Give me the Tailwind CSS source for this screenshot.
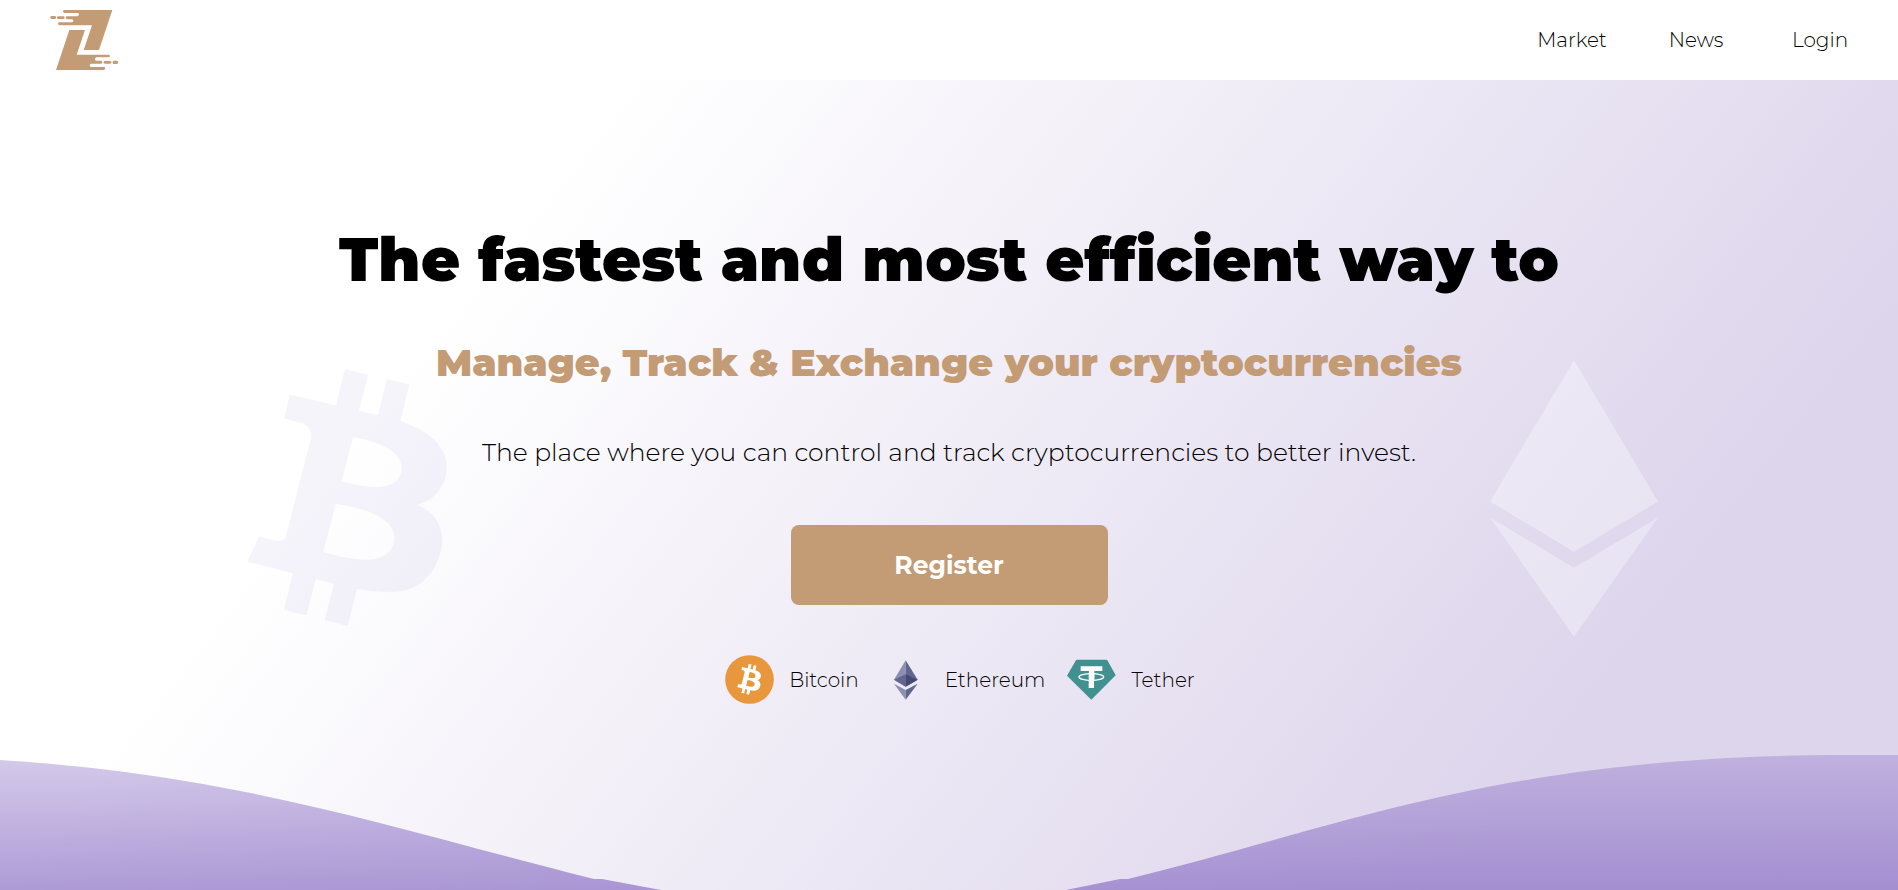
<!DOCTYPE html>
<html lang="en">
<head>
<meta charset="utf-8">
<meta name="viewport" content="width=device-width, initial-scale=1">
<title>Crypto exchange</title>
<script src="https://cdn.jsdelivr.net/npm/@tailwindcss/browser@4"></script>
</head>
<body class="flex min-h-screen flex-col bg-white font-['Montserrat','Inter',sans-serif] text-black">
<svg class="hidden" aria-hidden="true">
  <symbol id="btc" viewBox="54 57 600 771">
    <path fill-rule="evenodd" d="M348 58L418 74L390 182L446 195L474 88L541 103L514 213C606 246 653 290 653 352C653 405 620 450 565 465C615 484 640 525 640 578C637 600 620 716 500 725C450 727 410 722 384 717L356 827L287 810L315 701L260 687L233 796L165 780L192 670L55 635L90 560L145 573C160 575 169 568 172 553L246 265C250 240 235 225 218 219L165 205L183 134L321 166ZM372 261L338 394C370 403 400 410 440 411C490 412 518 390 518 352C518 305 450 275 372 261ZM320 461L283 606C330 620 375 629 420 629C470 627 496 600 496 562C496 510 420 475 320 461Z"/>
  </symbol>
</svg>

<header class="flex h-20 shrink-0 items-center justify-between bg-white pr-4 pl-[50px]">
  <a href="#" aria-label="Home">
    <svg class="h-16 w-[70px]" viewBox="60 24 210 192" fill="#c39b74">
      <path d="M103 30H247L207 150H161L186 76H89Q84 75 84 71T89 67H126Q130 65 130 62T126 58H112Q107 57 107 53T112 49H142Q147 47 147 43T142 39H103Q99 38 99 34T103 30Z"/>
      <path d="M118 90H165L140 164H236Q240 165 240 168T236 172H199Q195 174 195 178T199 182H213Q217 183 217 187T213 191H183Q179 193 179 196T183 201H222Q226 202 226 205T222 210H78Z"/>
      <rect x="61" y="48" width="17" height="9" rx="4"/><rect x="81" y="49" width="23" height="8" rx="4"/>
      <rect x="221" y="183" width="23" height="8" rx="4"/><rect x="248" y="182" width="16" height="10" rx="4"/>
    </svg>
  </a>
  <nav class="flex text-center text-xl font-light">
    <a class="w-[124px]" href="#">Market</a>
    <a class="w-[124px]" href="#">News</a>
    <a class="w-[124px]" href="#">Login</a>
  </nav>
</header>

<main class="relative flex flex-1 flex-col items-center overflow-hidden bg-[linear-gradient(128deg,#ffffff_25%,#ddd5ec_82%)] pt-[140px] pb-[180px] text-center">
  <svg class="absolute top-[289px] left-[13%] h-[257px] w-[200px]" fill="#7b70d0" fill-opacity=".08" aria-hidden="true"><use href="#btc"/></svg>
  <svg class="absolute top-[280px] right-[240px] h-[277px] w-[168px]" viewBox="59 60 504 830" fill="#fff" fill-opacity=".32" aria-hidden="true">
    <path d="M311 60L563 484L311 635L59 484ZM59 532L311 683L563 532L311 890Z"/>
  </svg>
  <svg class="absolute bottom-0 left-0 h-[136px] w-full" viewBox="0 754 1898 136" preserveAspectRatio="none" aria-hidden="true">
    <defs>
      <linearGradient id="wave" gradientUnits="userSpaceOnUse" x1="0" y1="755" x2="0" y2="890">
        <stop offset="0" stop-color="#8d72c6" stop-opacity=".37"/><stop offset="1" stop-color="#8b70c5" stop-opacity=".7"/>
      </linearGradient>
    </defs>
    <path fill="url(#wave)" d="M0 760C240 775 390 828 594 879H602L661 890H0ZM1066 890L1120 879H1128C1350 825 1500 755 1850 755H1898V890Z"/>
  </svg>

  <h1 class="relative text-[60px] leading-[80px] font-black">The fastest and most efficient way to</h1>
  <h2 class="relative mt-10 text-[38px] leading-[46px] font-black text-[#c39b74]">Manage, Track &amp; Exchange your cryptocurrencies</h2>
  <p class="relative mt-[50px] text-[25px] leading-8 font-light">The place where you can control and track cryptocurrencies to better invest.</p>
  <button type="button" class="relative mt-[57px] h-20 w-[317px] shrink-0 rounded-lg bg-[#c39b74] pt-0.5 text-[25px] font-bold text-white">Register</button>
  <ul class="relative mt-[50px] flex gap-[22px] pl-[22px] text-xl font-light">
    <li class="flex items-center gap-[15px]">
      <svg class="size-[49px]" viewBox="0 0 147 147" aria-hidden="true"><circle cx="73.5" cy="73.5" r="73" fill="#e8973c"/><g fill="#fff"><use href="#btc" x="36" y="26" width="72" height="94"/></g></svg>
      Bitcoin
    </li>
    <li class="flex items-center gap-[15px]">
      <svg class="size-[49px]" viewBox="541 46 147 147" aria-hidden="true">
        <path fill="#8b90b2" d="M615 62V141L580 120Z"/><path fill="#62668e" d="M615 62V141L651 120Z"/>
        <path fill="#62668e" d="M615 104V141L580 120Z"/><path fill="#454a75" d="M615 104V141L651 120Z"/>
        <path fill="#8b90b2" d="M580 132L615 151V180Z"/><path fill="#62668e" d="M651 132L615 151V180Z"/>
      </svg>
      Ethereum
    </li>
    <li class="flex items-center gap-[15px]">
      <svg class="size-[49px]" viewBox="1100 46 147 147" aria-hidden="true">
        <path fill="#409190" d="M1130 60H1217Q1220 60 1222 63L1246 107L1173 180L1100 108L1126 63Q1128 60 1130 60Z"/>
        <path fill="#fff" d="M1141 80H1206V94H1182V122H1181V145H1165V122H1166V94H1141Z"/>
        <ellipse cx="1173" cy="112" rx="37" ry="10" fill="none" stroke="#fff" stroke-width="4"/>
        <path fill="#fff" d="M1165 100H1182V117H1165Z"/>
      </svg>
      Tether
    </li>
  </ul>
</main>
</body>
</html>
